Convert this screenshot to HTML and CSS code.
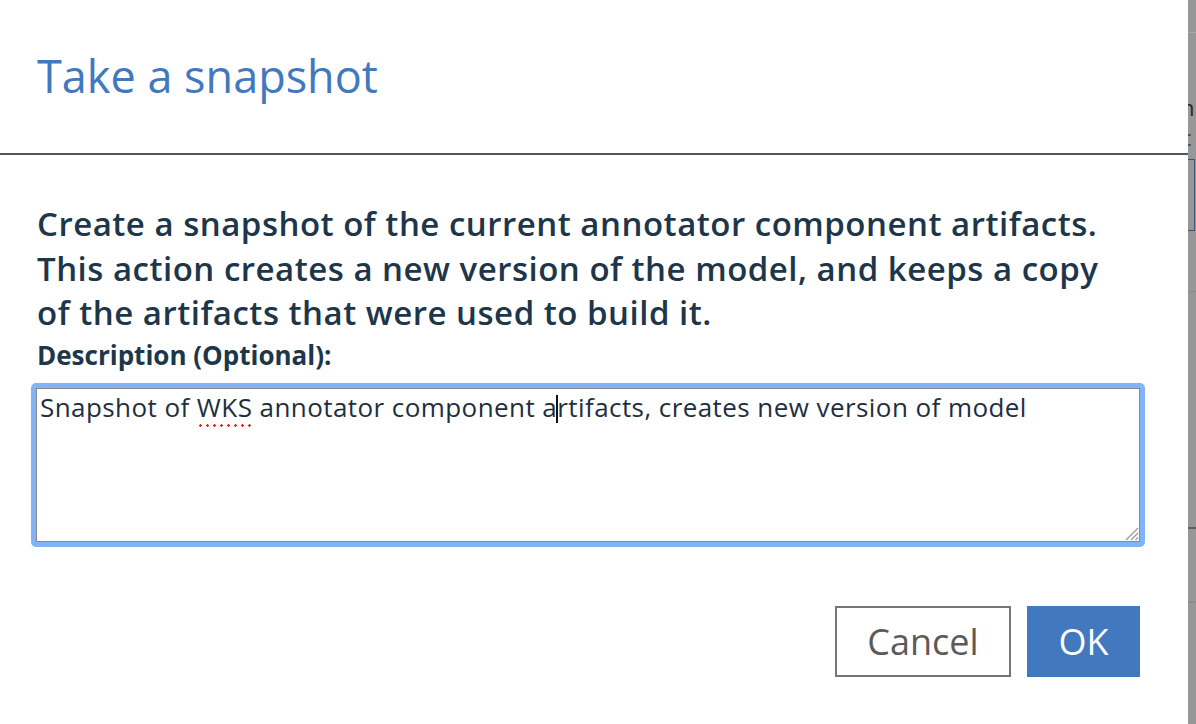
FILE: index.html
```html
<!DOCTYPE html>
<html>
<head>
<meta charset="utf-8">
<link rel="stylesheet" href="styles.css">
</head>
<body>
<div class="modal">
  <div class="modal-header">
    <h1 class="title">Take a snapshot</h1>
  </div>
  <div class="modal-body">
    <p class="intro">Create a snapshot of the current annotator component artifacts.<br>This action creates a new version of the model, and keeps a copy<br>of the artifacts that were used to build it.</p>
    <label class="field-label">Description (Optional):</label>
    <div class="ta-ring">
      <div class="ta-box">
        <div class="ta-text">Snapshot of <span class="misspelled">WKS</span> annotator component a<span class="caret"></span>rtifacts, creates new version of model</div>
        <svg class="grip" width="16" height="16" viewBox="0 0 16 16">
          <line x1="15" y1="3" x2="3" y2="15" stroke="#9a9a9a" stroke-width="1.3"/>
          <line x1="15" y1="8" x2="8" y2="15" stroke="#9a9a9a" stroke-width="1.3"/>
          <line x1="15" y1="12.5" x2="12.5" y2="15" stroke="#9a9a9a" stroke-width="1.3"/>
        </svg>
      </div>
    </div>
    <div class="actions">
      <button class="btn btn-secondary">Cancel</button>
      <button class="btn btn-primary">OK</button>
    </div>
  </div>
</div>
<div class="backdrop-strip">
  <div class="bg-line bg-line-top"></div>
  <div class="bg-text bg-text-1">n</div>
  <div class="bg-text bg-text-2">c</div>
  <div class="bg-box"></div>
  <div class="bg-line bg-line-mid"></div>
  <div class="bg-line bg-line-dark"></div>
  <div class="bg-line bg-line-low"></div>
</div>
</body>
</html>
```
FILE: styles.css
```css
* { box-sizing: border-box; }
html, body { margin: 0; padding: 0; }
body {
  width: 1196px;
  height: 724px;
  overflow: hidden;
  display: flex;
  font-family: "Open Sans", "Noto Sans", sans-serif;
  background: #fff;
}
.modal {
  width: 1188px;
  flex: none;
  background: #fff;
  display: flex;
  flex-direction: column;
}
.modal-header {
  height: 155px;
  padding: 53px 37px 0;
  border-bottom: 2px solid #555;
}
.title {
  margin: 0;
  font-size: 45px;
  line-height: 45px;
  font-weight: 400;
  color: #4178be;
}
.modal-body {
  padding: 47px 48px 0 37px;
}
.intro {
  margin: 0;
  font-size: 33px;
  line-height: 44.5px;
  font-weight: 600;
  letter-spacing: 0.5px;
  color: #1d364a;
}
.field-label {
  display: block;
  margin-top: 4px;
  font-size: 26px;
  line-height: 30px;
  font-weight: 700;
  color: #1d364a;
}
.ta-ring {
  margin: 13px 0 0 -6px;
  width: 1114px;
  padding: 5px;
  background: #80b3f7;
  border-radius: 5px;
}
.ta-box {
  position: relative;
  height: 154px;
  background: #fff;
  border: 1.5px solid #8a8a8a;
  padding: 3px 3px;
}
.ta-text {
  font-size: 26px;
  line-height: 30px;
  letter-spacing: 0.43px;
  color: #1d2f3f;
  white-space: nowrap;
}
.misspelled {
  position: relative;
}
.misspelled::after {
  content: "";
  position: absolute;
  left: 0;
  right: 0;
  bottom: -2px;
  height: 3px;
  background-image: radial-gradient(circle, #e52020 1.1px, transparent 1.5px);
  background-size: 7px 3px;
  background-repeat: repeat-x;
}
.caret {
  display: inline-block;
  width: 2px;
  height: 28px;
  margin: 0 -1px;
  vertical-align: -6px;
  background: #111;
}
.grip {
  position: absolute;
  right: 0;
  bottom: 0;
}
.actions {
  margin-top: 59px;
  display: flex;
  justify-content: flex-end;
  gap: 16px;
}
.btn {
  height: 71px;
  font-family: inherit;
  font-size: 36px;
  font-weight: 400;
  padding: 0;
  cursor: pointer;
}
.btn-secondary {
  width: 176px;
  background: #fff;
  color: #5a5a5a;
  border: 2px solid #767676;
}
.btn-primary {
  width: 113px;
  background: #4178be;
  color: #fff;
  border: none;
}
.backdrop-strip {
  flex: 1;
  background: #979797;
  overflow: hidden;
  display: flex;
  flex-direction: column;
}
.bg-line { height: 1px; flex: none; }
.bg-line-top { margin-top: 32px; background: #a8a8a8; }
.bg-text {
  font-size: 22px;
  line-height: 24px;
  color: #2a2a2a;
  margin-left: -7px;
  white-space: nowrap;
}
.bg-text-1 { margin-top: 62px; }
.bg-text-2 { margin-top: 6px; color: #444; }
.bg-box {
  margin-top: 10px;
  margin-left: -20px;
  width: 27px;
  height: 72px;
  border: 1.5px solid #3d5678;
}
.bg-line-mid { margin-top: 60px; background: #8c8c8c; }
.bg-line-dark { margin-top: 235px; height: 2px; background: #5f5f5f; }
.bg-line-low { margin-top: 72px; height: 2px; background: #8c8c8c; }
```
